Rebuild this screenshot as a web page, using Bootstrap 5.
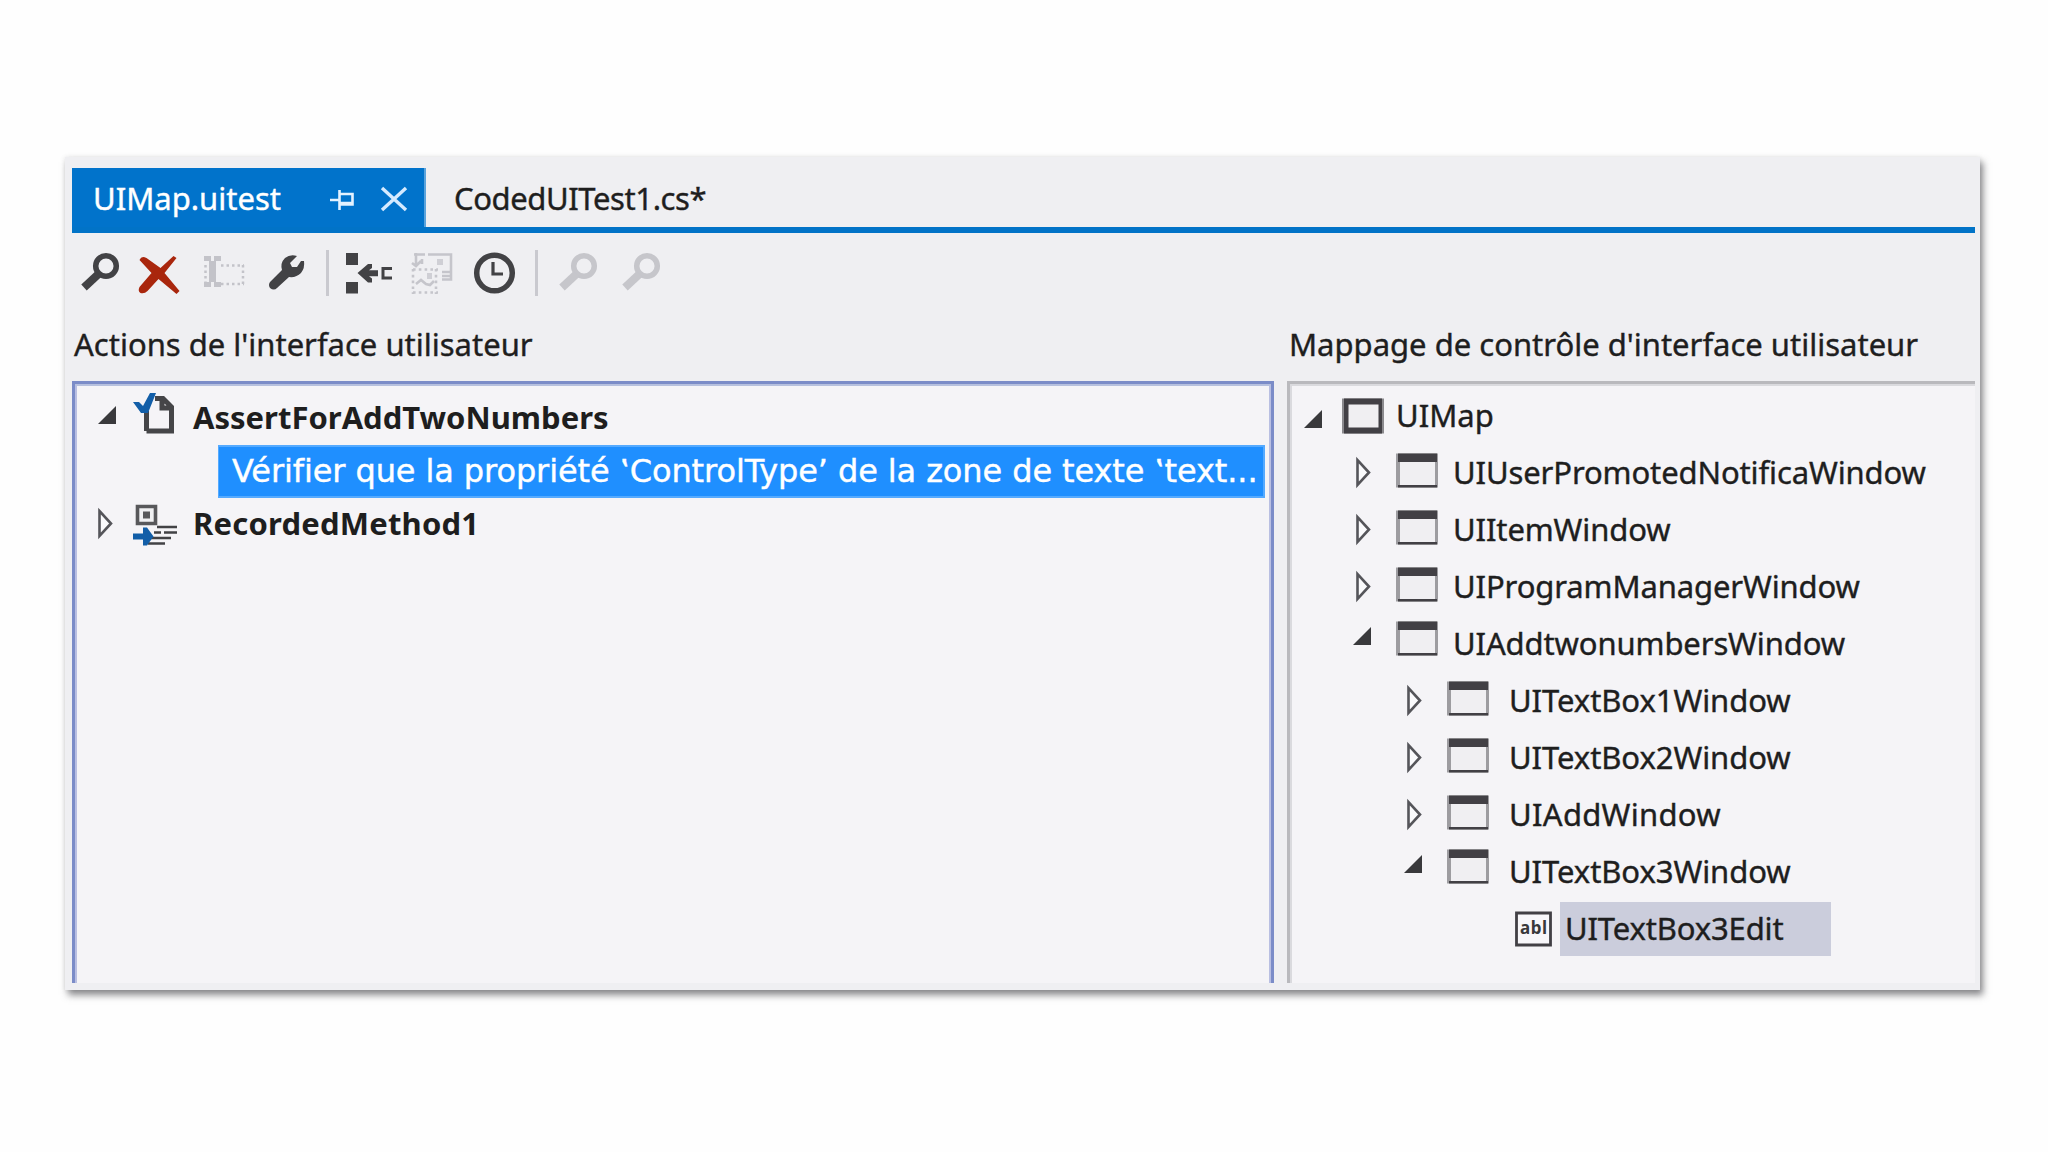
<!DOCTYPE html>
<html lang="fr">
  <head>
    <meta charset="UTF-8" />
    <meta name="viewport" content="width=device-width, initial-scale=1.0" />
    <title>UIMap.uitest</title>
    <link
      rel="stylesheet"
      href="https://cdn.jsdelivr.net/npm/bootstrap@5.3.0/dist/css/bootstrap.min.css"
    />
    <style>
      body {
        background-color: #fefefe;
        color: #1e1e1e;
        font-family: "Noto Sans", "Open Sans", sans-serif;
        font-size: 31px;
        line-height: 1.2;
        white-space: nowrap;
        -webkit-text-stroke: 0.4px;
      }
      svg {
        flex: none;
        overflow: visible;
      }
      .page {
        padding: 157px 0 0 65px;
      }
      .editor {
        width: 1915px;
        height: 833px;
        padding: 11px 5px 7px 7px;
        background-color: #efeff2;
        box-shadow: 3px 5px 7px rgba(60, 60, 65, 0.6), 0 0 5px rgba(0, 0, 0, 0.08);
      }

      /* tabs */
      .doc-tabs {
        height: 65px;
        border-bottom: 6px solid #0173c7;
      }
      .doc-tab {
        padding: 2px 0 0 28px;
      }
      .doc-tab.active {
        width: 354px;
        padding: 2px 16px 0 21px;
        color: #fff;
        background-color: #0173cb;
        border-right: 2px solid #5aa3dc;
      }
      .pin {
        margin: 2px 26px 0 auto;
      }

      /* toolbar */
      .tools {
        height: 80px;
        gap: 15px;
        padding-left: 1px;
      }
      .tool-sep {
        width: 3px;
        height: 46px;
        margin: 0 1px;
        background-color: #c9c9cf;
      }

      /* panes */
      .panes {
        gap: 13px;
      }
      .actions {
        width: 1202px;
      }
      .pane-title {
        height: 60px;
        margin-bottom: 8px;
        padding: 3px 0 0 2px;
      }
      .pane-body {
        background-color: #f5f4f7;
        border: 3px solid #7b8cc8;
        border-bottom: 0;
        box-shadow: inset 0 2px #b6c0de, inset 2px 0 #b9bfe2, inset -2px 0 #b9bfe2;
        padding: 3px 6px 0 23px;
      }
      .control-map .pane-body {
        border-color: #b9b9bd;
        border-right: 0;
        box-shadow: inset 0 2px #dadade, inset 2px 0 #dadade;
        padding: 3px 0 0 2px;
      }

      /* recorded actions */
      .method {
        height: 58px;
        padding-top: 4px;
        font-weight: bold;
        -webkit-text-stroke: 0;
      }
      .method.last {
        height: 50px;
        padding-top: 2px;
      }
      .method-icon {
        margin: 0 16px 0 11px;
      }
      .step {
        height: 53px;
        margin-left: 120px;
        padding-left: 13px;
        color: #fff;
        background-color: #1f8fff;
        border: 2px solid #55aaff;
        border-left-width: 1px;
        font-family: "DejaVu Sans", sans-serif;
        font-size: 32px;
        letter-spacing: -0.1px;
      }

      /* control tree */
      .node {
        height: 57px;
      }
      .lv0 { padding-left: 9px; }
      .lv1 { padding-left: 58px; letter-spacing: -0.12px; }
      .lv2 { padding-left: 109px; letter-spacing: -0.07px; }
      .lv3 { padding-left: 222px; letter-spacing: -0.15px; }
      .lv0 .node-icon { margin: 0 11px 0 16px; }
      .lv1 .node-icon { margin: 0 14px 0 21px; }
      .lv2 .node-icon { margin: 0 19px 0 21px; }
      .node.open .node-icon { margin-bottom: 6px; }
      .picked {
        width: 271px;
        height: 54px;
        margin-left: 2px;
        padding-left: 5px;
        background-color: #cbcddc;
      }
      .node.open .twisty { margin-bottom: 22px; }
      .fit-tight { letter-spacing: -0.4px; }
      .fit-method { letter-spacing: 0.2px; }
      .fit-add { letter-spacing: 0.3px; }
    </style>
  </head>
  <body>
    <!-- shared icons -->
    <svg class="d-none">
      <symbol id="find" viewBox="0 0 48 48">
        <circle cx="33" cy="17" r="10.3" fill="none" stroke="currentColor" stroke-width="5.500" />
        <path d="M25.500 25 11 38.500" stroke="currentColor" stroke-width="8" />
      </symbol>
      <symbol id="closed" viewBox="0 0 24 36">
        <path d="M7.500 5v25L19 17.500z" fill="#fafafc" stroke="#55555a" stroke-width="2.600" />
      </symbol>
      <symbol id="opened" viewBox="0 0 24 36">
        <path d="M21 12v18H3z" fill="#39393c" />
      </symbol>
      <symbol id="window" viewBox="0 0 44 40">
        <path d="M1 .5h42v34H1z" fill="#9d9ca0" />
        <path d="M5 9h35v24H5z" fill="#f0eff2" />
        <path d="M3 .5h39v8.500H3zM3 32h39v2.500H3z" fill="#424045" />
      </symbol>
    </svg>

    <div class="page min-vh-100">
    <div class="editor d-flex flex-column">
      <div class="doc-tabs d-flex">
        <div class="doc-tab active d-flex align-items-center">
          <span>UIMap.uitest</span>
          <svg class="pin" width="24" height="20" viewBox="0 0 24 20">
            <path d="M0 10h9M9.500 0v20M10 4h12.500v10.500H10M10 13h12.500" fill="none" stroke="#e4f2ff" stroke-width="2.600" />
          </svg>
          <svg width="28" height="24" viewBox="0 0 28 24">
            <path d="M2 1 26 23M26 1 2 23" stroke="#d5eaff" stroke-width="3.400" />
          </svg>
        </div>
        <div class="doc-tab d-flex align-items-center fit-tight">CodedUITest1.cs*</div>
      </div>

      <div class="tools d-flex align-items-center">
        <svg width="48" height="48" color="#424245"><use href="#find" /></svg>
        <svg width="48" height="48" viewBox="2.500 0 48 48">
          <path d="M6 11q2-5 7-2L27 19 40 7l3 2-12 15 15 18-3 3-18-15-11 12q-3 3-7 2-3-2-1-6L18 24z" fill="#a9260d" />
        </svg>
        <svg width="48" height="48" viewBox="0 0 48 48" fill="#c3c3c9">
          <path d="M5 7h7v5H5zM15 7h7v5h-7zM5 33h7v5H5zM15 33h7v5h-7zM10 12h7v21h-7z" />
          <path d="M22 16.500h23M6.500 16v20M44 16v20M22 35h23" fill="none" stroke="#c3c3c9" stroke-width="2.500" stroke-dasharray="2.500 3" />
        </svg>
        <svg width="48" height="48" viewBox="0 0 48 48">
          <path d="M35 7q-7-2-12 2-5 5-3 12L8 33q-2 3 0 6 4 3 7 0l12-11q7 1 12-4 4-5 3-12h-3l-4 6h-5l-2-4z" fill="#424245" />
        </svg>
        <div class="tool-sep"></div>
        <svg width="48" height="48" viewBox="0 0 48 48" fill="#424245">
          <path d="M1 4h12v12H1zM1 33h12v11.500H1z" />
          <path d="M12.500 24 23 15h4v4l-3 2.300h9v6h-9l3 2.200v4h-4z" />
          <path d="M47 19.500h-9v9.500h9" fill="none" stroke="#424245" stroke-width="3" />
        </svg>
        <svg width="48" height="48" viewBox="0 0 48 48" fill="none" stroke="#c5c5cb" stroke-width="2.600">
          <path d="M6 5.500h11M20 5.500h23v25h-9M8 4v11M4 14l4 3 5-5M14 10v5M34 23h9M34 27h9" />
          <path d="M5 20v25M28 20v25M5 20.500h25M5 43.500h25" stroke-dasharray="2.600 3.200" />
          <path d="M8 35l5-4 5 4 4 1 4-4" />
          <path d="M29 10h6v6h-6zM19 24h5v6h-5z" fill="#cfcfd5" stroke="none" />
        </svg>
        <svg width="48" height="48" viewBox="0 0 48 48" fill="none" stroke="#424245">
          <circle cx="23.500" cy="24" r="17.800" stroke-width="5.500" />
          <path d="M22 13v12h10" stroke-width="3.200" />
        </svg>
        <div class="tool-sep"></div>
        <svg width="46" height="48" viewBox="3 0 46 48" color="#c6c6cb"><use href="#find" width="48" height="48" /></svg>
        <svg width="48" height="48" viewBox="1 0 48 48" color="#c6c6cb"><use href="#find" width="48" height="48" /></svg>
      </div>

      <div class="panes d-flex flex-grow-1">
        <div class="actions d-flex flex-column">
          <div class="pane-title d-flex align-items-center">Actions de l'interface utilisateur</div>
          <div class="pane-body flex-grow-1">
            <div class="method d-flex align-items-center">
              <svg width="24" height="36" viewBox="0 0 24 36"><path d="M18 6v18H0z" fill="#39393c" /></svg>
              <svg class="method-icon" width="44" height="44" viewBox="1 3 44 44">
                <path d="M14.500 38V18M23 5.500h8l8.500 8.500v24H14.500M30 6v9h9" fill="none" stroke="#454548" stroke-width="5" />
                <path d="M1 9h6l4 4 7-13h6l-8 20H9z" fill="#125ea8" />
              </svg>
              <span>AssertForAddTwoNumbers</span>
            </div>
            <div class="step d-flex align-items-center">Vérifier que la propriété ‛ControlType’ de la zone de texte ‛text...</div>
            <div class="method last d-flex align-items-center">
              <svg width="24" height="36" viewBox="6 0 24 36"><use href="#closed" width="24" height="36" /></svg>
              <svg class="method-icon" width="44" height="44" viewBox="1 0 44 44">
                <path d="M5.500 4.500h18v17h-18z" fill="#f0f0f2" stroke="#58585b" stroke-width="3.600" />
                <path d="M11 9.500h7v7h-7z" fill="#58585b" />
                <path d="M25 25h20M22 30.500h7M32 30.500h13M18 36h21M16 41.500h17" stroke="#424245" stroke-width="2.600" />
                <path d="M1 31.500h10v-6h4l6.500 9-6.500 9h-4v-6H1z" fill="#125ea8" />
              </svg>
              <span class="fit-method">RecordedMethod1</span>
            </div>
          </div>
        </div>

        <div class="control-map d-flex flex-column flex-grow-1">
          <div class="pane-title d-flex align-items-center">Mappage de contrôle d'interface utilisateur</div>
          <div class="pane-body flex-grow-1">
            <div class="node lv0 d-flex align-items-center">
              <svg width="24" height="36"><use href="#opened" /></svg>
              <svg class="node-icon" width="44" height="40" viewBox="0 0 44 40">
                <path d="M1 2.500h42v35H1z" fill="#8b8a8e" />
                <path d="M3 2.500h38v35H3z" fill="#424045" />
                <path d="M7.500 8.500h30v23h-30z" fill="#f0eff2" />
              </svg>
              <span>UIMap</span>
            </div>
            <div class="node lv1 d-flex align-items-center">
              <svg width="24" height="36"><use href="#closed" /></svg>
              <svg class="node-icon" width="44" height="40"><use href="#window" /></svg>
              <span>UIUserPromotedNotificaWindow</span>
            </div>
            <div class="node lv1 d-flex align-items-center">
              <svg width="24" height="36"><use href="#closed" /></svg>
              <svg class="node-icon" width="44" height="40"><use href="#window" /></svg>
              <span>UIItemWindow</span>
            </div>
            <div class="node lv1 d-flex align-items-center">
              <svg width="24" height="36"><use href="#closed" /></svg>
              <svg class="node-icon" width="44" height="40"><use href="#window" /></svg>
              <span>UIProgramManagerWindow</span>
            </div>
            <div class="node lv1 open d-flex align-items-center">
              <svg class="twisty" width="24" height="36"><use href="#opened" /></svg>
              <svg class="node-icon" width="44" height="40"><use href="#window" /></svg>
              <span>UIAddtwonumbersWindow</span>
            </div>
            <div class="node lv2 d-flex align-items-center">
              <svg width="24" height="36"><use href="#closed" /></svg>
              <svg class="node-icon" width="44" height="40"><use href="#window" /></svg>
              <span>UITextBox1Window</span>
            </div>
            <div class="node lv2 d-flex align-items-center">
              <svg width="24" height="36"><use href="#closed" /></svg>
              <svg class="node-icon" width="44" height="40"><use href="#window" /></svg>
              <span>UITextBox2Window</span>
            </div>
            <div class="node lv2 d-flex align-items-center">
              <svg width="24" height="36"><use href="#closed" /></svg>
              <svg class="node-icon" width="44" height="40"><use href="#window" /></svg>
              <span class="fit-add">UIAddWindow</span>
            </div>
            <div class="node lv2 open d-flex align-items-center">
              <svg class="twisty" width="24" height="36"><use href="#opened" /></svg>
              <svg class="node-icon" width="44" height="40"><use href="#window" /></svg>
              <span>UITextBox3Window</span>
            </div>
            <div class="node lv3 d-flex align-items-center">
              <svg width="44" height="40" viewBox="0 0 44 40">
                <path d="M2.500 4h34v32h-34z" fill="#f8f7fa" stroke="#424045" stroke-width="2.800" />
                <text x="19.500" y="25" font-size="17" font-weight="bold" text-anchor="middle" textLength="27" fill="#39393c">abl</text>
              </svg>
              <span class="picked d-flex align-items-center">UITextBox3Edit</span>
            </div>
          </div>
        </div>
      </div>
    </div>
    </div>

    <script src="https://cdn.jsdelivr.net/npm/bootstrap@5.3.0/dist/js/bootstrap.bundle.min.js"></script>
  </body>
</html>
